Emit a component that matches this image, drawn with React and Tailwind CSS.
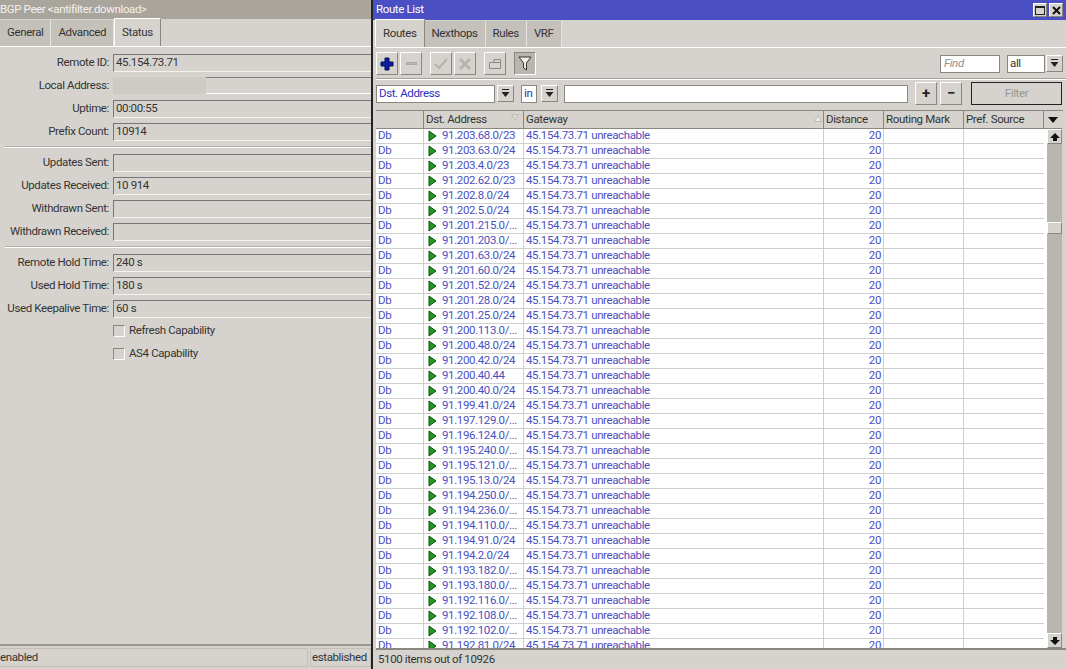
import React from "react";

const routes = [
  "91.203.68.0/23", "91.203.63.0/24", "91.203.4.0/23", "91.202.62.0/23", "91.202.8.0/24",
  "91.202.5.0/24", "91.201.215.0/...", "91.201.203.0/...", "91.201.63.0/24", "91.201.60.0/24",
  "91.201.52.0/24", "91.201.28.0/24", "91.201.25.0/24", "91.200.113.0/...", "91.200.48.0/24",
  "91.200.42.0/24", "91.200.40.44", "91.200.40.0/24", "91.199.41.0/24", "91.197.129.0/...",
  "91.196.124.0/...", "91.195.240.0/...", "91.195.121.0/...", "91.195.13.0/24", "91.194.250.0/...",
  "91.194.236.0/...", "91.194.110.0/...", "91.194.91.0/24", "91.194.2.0/24", "91.193.182.0/...",
  "91.193.180.0/...", "91.192.116.0/...", "91.192.108.0/...", "91.192.102.0/...", "91.192.81.0/24",
];

const raised = "border border-t-white border-l-white border-r-[#8a8780] border-b-[#8a8780]";
const tabOff = "h-[26px] mt-px flex items-center px-[7px] bg-[#c4c1bb] border-r border-r-[#e6e4df]";
const tabOn = "h-[28px] flex items-start pt-[5px] px-[7px] bg-[#d6d3ce] border-t border-l border-r border-t-white border-l-white border-r-[#8a8780] -mt-px";

function Tabs({ items, active }) {
  return (
    <div className="flex items-start h-[27px]">
      {items.map((t) => (
        <div key={t} className={t === active ? tabOn : tabOff}>{t}</div>
      ))}
    </div>
  );
}

// label + sunken value box, one row in the peer form
function Field({ label, value, blurred }) {
  return (
    <div className="flex items-center h-[17px] mb-[6px]">
      <div className="w-[109px] shrink-0 text-right whitespace-nowrap">{label}:</div>
      <div className="w-[4px] shrink-0" />
      {blurred ? (
        <div className="flex-1 flex h-[17px]">
          <div className="w-[93px] bg-[#cdcbc6]" />
          <div className="flex-1 border-t border-t-[#808080] border-b border-b-white" />
        </div>
      ) : (
        <div className="flex-1 h-[18px] pl-[2px] flex items-center border-t border-l border-t-[#777] border-l-[#777] border-b border-b-[#f4f3f0] border-r-0">
          {value}
        </div>
      )}
    </div>
  );
}

function Sep() {
  return <div className="h-[2px] mt-px mb-[6px] ml-[5px] bg-[#b5b2ac] border-b border-b-white" />;
}

function Check({ label }) {
  return (
    <div className="flex items-center h-[15px] ml-[113px] mb-[8px] gap-[4px]">
      <div className="w-[12px] h-[12px] border border-t-[#8a8780] border-l-[#8a8780] border-r-white border-b-white bg-[#d6d3ce]" />
      <div>{label}</div>
    </div>
  );
}

function DropArrow() {
  return (
    <svg width="9" height="9" viewBox="0 0 9 9">
      <rect x="1" y="0" width="7" height="1" fill="#222" />
      <path d="M0.5 3H8.5L4.5 8Z" fill="#222" />
    </svg>
  );
}

function ToolBtn({ children, className = "" }) {
  return (
    <div className={`w-[22px] h-[23px] flex items-center justify-center bg-[#d6d3ce] ${raised} ${className}`}>
      {children}
    </div>
  );
}

function SmallBtn({ className = "" }) {
  return (
    <div className={`w-[17px] h-[17px] flex items-center justify-center ${raised} ${className}`}>
      <DropArrow />
    </div>
  );
}

function RouteRow({ dst }) {
  return (
    <div className="flex h-[15px] shrink-0 border-b border-b-[#cfcfcf] text-[#4a50c0] leading-[13px]">
      <div className="w-[48px] pl-[2px] border-r border-r-[#cfcfcf]">Db</div>
      <div className="w-[100px] flex items-start border-r border-r-[#cfcfcf] pl-[4px] whitespace-nowrap">
        <svg width="9" height="12" viewBox="0 0 9 12" className="mt-px mr-[5px] shrink-0">
          <path d="M1 1L8 6L1 11Z" fill="#1f9a1f" stroke="#0f4f0f" strokeWidth="1" />
        </svg>
        <span>{dst}</span>
      </div>
      <div className="w-[300px] pl-[2px] border-r border-r-[#cfcfcf] whitespace-nowrap">45.154.73.71 unreachable</div>
      <div className="w-[60px] pr-[2px] text-right border-r border-r-[#cfcfcf]">20</div>
      <div className="w-[80px] border-r border-r-[#cfcfcf]" />
      <div className="w-[80px]" />
    </div>
  );
}

function HeadCell({ width, children, sort }) {
  return (
    <div className={`relative flex items-center pl-[2px] h-[18px] bg-[#d6d3ce] border-r border-r-[#8a8780] border-b border-b-[#8a8780] whitespace-nowrap ${width}`}>
      {children}
      {sort === "down" && (
        <svg width="8" height="7" viewBox="0 0 8 7" className="absolute right-[4px] top-[3px]">
          <path d="M0.5 0.5H7.5L4 6.5Z" fill="#dddbd6" stroke="#bdbab4" />
        </svg>
      )}
      {sort === "up" && (
        <svg width="8" height="7" viewBox="0 0 8 7" className="absolute right-[1px] top-[4px]">
          <path d="M0.5 6.5H7.5L4 0.5Z" fill="#eeede9" stroke="#bdbab4" />
        </svg>
      )}
    </div>
  );
}

function BgpPeer() {
  return (
    <div className="w-[371px] shrink-0 h-full flex flex-col bg-[#d6d3ce] overflow-hidden">
      <div className="h-[19px] bg-[#a9a59d] text-[#f2f1ee] flex items-center whitespace-nowrap">BGP Peer &lt;antifilter.download&gt;</div>
      <Tabs items={["General", "Advanced", "Status"]} active="Status" />
      <div className="h-px bg-white" />
      <div className="flex-1 pt-[7px]">
        <Field label="Remote ID" value="45.154.73.71" />
        <Field label="Local Address" blurred />
        <Field label="Uptime" value="00:00:55" />
        <Field label="Prefix Count" value="10914" />
        <Sep />
        <Field label="Updates Sent" value="" />
        <Field label="Updates Received" value="10 914" />
        <Field label="Withdrawn Sent" value="" />
        <Field label="Withdrawn Received" value="" />
        <Sep />
        <Field label="Remote Hold Time" value="240 s" />
        <Field label="Used Hold Time" value="180 s" />
        <Field label="Used Keepalive Time" value="60 s" />
        <Check label="Refresh Capability" />
        <Check label="AS4 Capability" />
      </div>
      <div className="h-[25px] border-t-2 border-t-[#9a978f] flex pt-[2px] pb-[2px]">
        <div className="w-[308px] border border-[#c2bfb9] border-l-0 flex items-center">enabled</div>
        <div className="w-[2px]" />
        <div className="flex-1 border border-[#c2bfb9] flex items-center pl-px whitespace-nowrap">established</div>
      </div>
    </div>
  );
}

function RouteList() {
  return (
    <div className="flex-1 h-full flex flex-col bg-[#d6d3ce] overflow-hidden">
      <div className="h-[20px] bg-[#4a4fc4] text-white flex items-center justify-between pl-[3px] pr-[3px]">
        <span>Route List</span>
        <div className="flex gap-[2px]">
          <div className={`w-[14px] h-[14px] bg-[#d6d3ce] flex items-center justify-center ${raised}`}>
            <div className="w-[10px] h-[9px] border border-[#222] border-t-2" />
          </div>
          <div className={`w-[14px] h-[14px] bg-[#d6d3ce] flex items-center justify-center ${raised}`}>
            <svg width="9" height="9" viewBox="0 0 9 9">
              <path d="M1 1L8 8M8 1L1 8" stroke="#111" strokeWidth="2" />
            </svg>
          </div>
        </div>
      </div>
      <div className="pl-[2px]">
        <Tabs items={["Routes", "Nexthops", "Rules", "VRF"]} active="Routes" />
      </div>
      <div className="h-px bg-white ml-[3px]" />

      {/* toolbar */}
      <div className="h-[29px] ml-[3px] flex items-center pt-[2px]">
        <ToolBtn>
          <svg width="14" height="14" viewBox="0 0 14 14">
            <path d="M5 1H9V5H13V9H9V13H5V9H1V5H5Z" fill="#0a1fa8" stroke="#071050" strokeWidth="1" />
          </svg>
        </ToolBtn>
        <ToolBtn className="ml-[2px]"><div className="w-[11px] h-[3px] bg-[#bcb9b3] border border-[#aaa]" /></ToolBtn>
        <ToolBtn className="ml-[8px]">
          <svg width="14" height="12" viewBox="0 0 14 12">
            <path d="M1 6L5 10L13 1" fill="none" stroke="#b5b2ac" strokeWidth="2" />
          </svg>
        </ToolBtn>
        <ToolBtn className="ml-[2px]">
          <svg width="12" height="12" viewBox="0 0 12 12">
            <path d="M1 1L11 11M11 1L1 11" stroke="#b5b2ac" strokeWidth="2.5" />
          </svg>
        </ToolBtn>
        <ToolBtn className="ml-[8px]">
          <svg width="14" height="12" viewBox="0 0 14 12">
            <path d="M1.5 4.5H12.5V10.5H1.5ZM6 4.5V1.5H12.5V4.5" fill="none" stroke="#8f8c85" />
          </svg>
        </ToolBtn>
        <div className="w-[22px] h-[23px] ml-[8px] flex items-center justify-center bg-[#b9b6b0] border border-t-[#8a8780] border-l-[#8a8780] border-r-white border-b-white">
          <svg width="14" height="15" viewBox="0 0 14 15">
            <path d="M1 1H13L8.5 7V14L5.5 12V7Z" fill="#eeeeea" stroke="#333" />
          </svg>
        </div>
        <div className="flex-1" />
        <div className="w-[60px] h-[18px] bg-white border border-[#8a8780] pl-[3px] italic text-[#8f8f8f] flex items-center">Find</div>
        <div className="w-[38px] h-[18px] ml-[7px] bg-white border border-[#8a8780] pl-[2px] flex items-center">all</div>
        <SmallBtn className="ml-px mr-[3px]" />
      </div>
      <div className="h-[2px] ml-[3px] mt-px bg-[#a5a29c] border-b border-b-white" />

      {/* filter row */}
      <div className="h-[30px] ml-[3px] flex items-center pb-[3px]">
        <div className="w-[119px] h-[18px] bg-white border border-[#8a8780] pl-[2px] text-[#2a2fc0] flex items-center">Dst. Address</div>
        <SmallBtn className="ml-[2px]" />
        <div className="w-[16px] h-[18px] ml-[7px] bg-white border border-[#8a8780] pl-[2px] text-[#2a2fc0] flex items-center">in</div>
        <SmallBtn className="ml-[4px]" />
        <div className="w-[344px] h-[18px] ml-[6px] bg-white border border-[#8a8780]" />
        <ToolBtn className="ml-[7px]"><span className="font-bold text-[15px] leading-none text-[#222]">+</span></ToolBtn>
        <ToolBtn className="ml-[3px]"><span className="font-bold text-[15px] leading-none text-[#222]">−</span></ToolBtn>
        <div className="w-[91px] h-[23px] ml-[9px] border border-[#222] text-[#9a978f] flex items-center justify-center">Filter</div>
      </div>

      {/* table */}
      <div className="flex-1 ml-[3px] mr-[3px] flex flex-col min-h-0 border-t border-t-[#8a8780]">
        <div className="flex h-[18px] shrink-0">
          <HeadCell width="w-[48px]" />
          <HeadCell width="w-[100px]" sort="down">Dst. Address</HeadCell>
          <HeadCell width="w-[300px]" sort="up">Gateway</HeadCell>
          <HeadCell width="w-[60px]">Distance</HeadCell>
          <HeadCell width="w-[80px]">Routing Mark</HeadCell>
          <HeadCell width="w-[80px]">Pref. Source</HeadCell>
          <div className="w-[18px] h-[18px] flex items-center justify-center border-b border-b-[#8a8780] bg-[#d6d3ce]">
            <svg width="10" height="6" viewBox="0 0 10 6"><path d="M0 0H10L5 6Z" fill="#111" /></svg>
          </div>
        </div>
        <div className="flex-1 flex min-h-0">
          <div className="w-[668px] bg-white flex flex-col overflow-hidden">
            {routes.map((r, i) => <RouteRow key={i} dst={r} />)}
          </div>
          <div className="w-[18px] pl-[3px] flex flex-col bg-white">
            <div className={`h-[15px] flex items-center justify-center bg-[#d6d3ce] ${raised}`}>
              <svg width="10" height="8" viewBox="0 0 10 8"><path d="M5 0L10 5H7V8H3V5H0Z" fill="#111" /></svg>
            </div>
            <div className="h-[78px] bg-[#b9b6b0]" />
            <div className={`h-[12px] bg-[#d6d3ce] ${raised}`} />
            <div className="flex-1 bg-[#b9b6b0]" />
            <div className={`h-[15px] flex items-center justify-center bg-[#d6d3ce] ${raised}`}>
              <svg width="10" height="8" viewBox="0 0 10 8"><path d="M5 8L10 3H7V0H3V3H0Z" fill="#111" /></svg>
            </div>
          </div>
        </div>
      </div>
      <div className="h-[21px] ml-[3px] border-t-2 border-t-[#8a8780] pl-[2px] flex items-center">5100 items out of 10926</div>
    </div>
  );
}

export default function App() {
  return (
    <div className="w-[1066px] h-[669px] flex overflow-hidden bg-[#d6d3ce] text-[#333] text-[11.5px] font-['Roboto',sans-serif] tracking-[-0.38px]">
      <BgpPeer />
      <div className="w-[2px] h-full shrink-0 bg-[#222]" />
      <RouteList />
    </div>
  );
}
